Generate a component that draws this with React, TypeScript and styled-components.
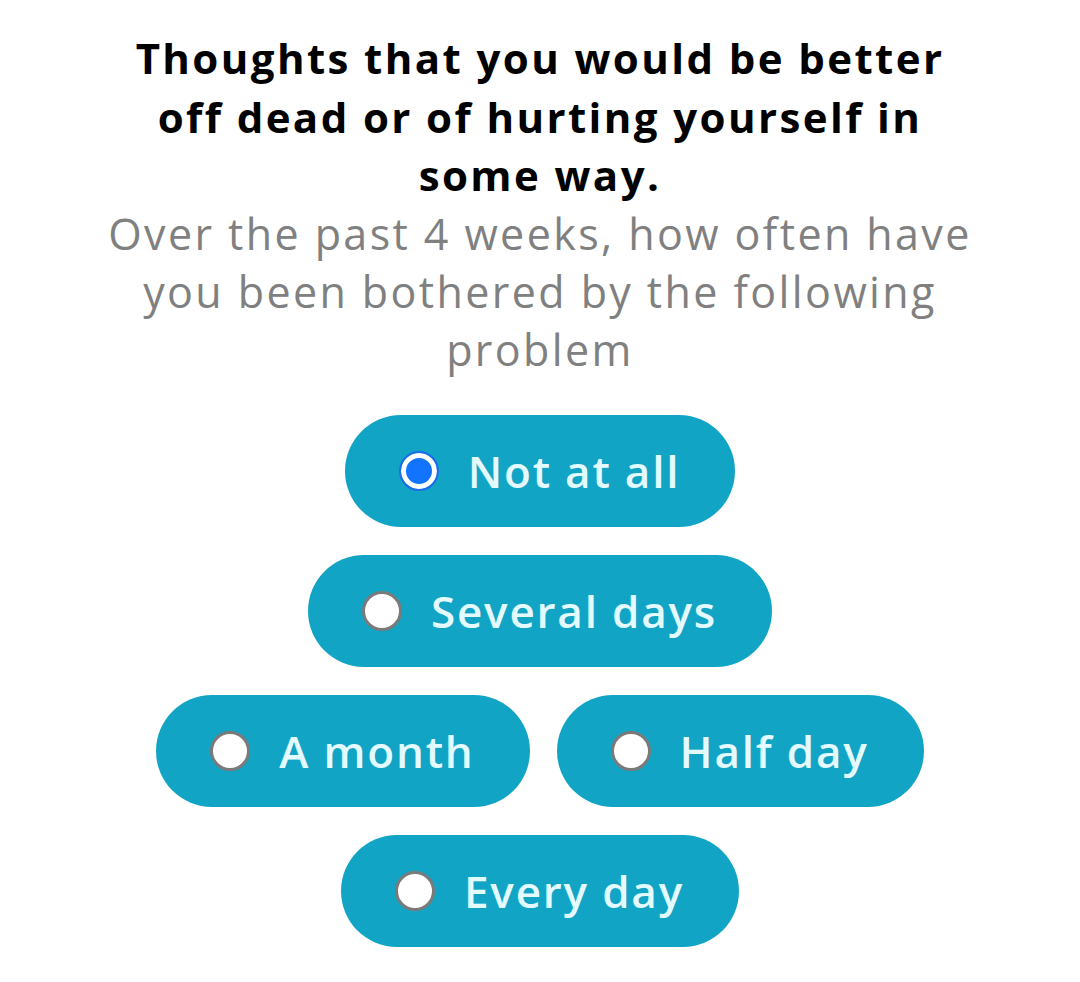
import React, { useState } from 'react';
import styled, { createGlobalStyle } from 'styled-components';

const GlobalStyle = createGlobalStyle`
  html, body {
    margin: 0;
    padding: 0;
    background: #ffffff;
  }
  body {
    font-family: "Open Sans", Lato, sans-serif;
  }
`;

const Page = styled.div`
  width: 1080px;
  min-height: 982px;
  display: flex;
  flex-direction: column;
  align-items: center;
  padding-top: 29px;
  box-sizing: border-box;
`;

const Question = styled.h1`
  margin: 0;
  width: 860px;
  text-align: center;
  font-size: 42px;
  line-height: 58.5px;
  letter-spacing: 2.4px;
  font-weight: 700;
  color: #000000;
`;

const Hint = styled.p`
  margin: 0;
  width: 880px;
  text-align: center;
  font-size: 43px;
  line-height: 58px;
  letter-spacing: 2.4px;
  font-weight: 400;
  color: #808080;
`;

const Options = styled.div`
  margin-top: 36px;
  width: 800px;
  display: flex;
  flex-wrap: wrap;
  justify-content: center;
  gap: 28px 27px;
`;

const Option = styled.button`
  height: 112px;
  padding: 0 55px 0 54px;
  border: none;
  border-radius: 56px;
  background: #12a4c5;
  display: flex;
  align-items: center;
  gap: 29px;
  cursor: pointer;
  font-family: inherit;
  font-size: 44px;
  font-weight: 600;
  letter-spacing: 1.8px;
  color: #e3fbff;
`;

type RadioProps = {
  checked: boolean;
};

const Radio = styled.span<RadioProps>`
  width: 40px;
  height: 40px;
  border-radius: 50%;
  box-sizing: border-box;
  flex-shrink: 0;
  background: ${({ checked }) => (checked ? '#1273ff' : '#ffffff')};
  border: ${({ checked }) => (checked ? '2px solid #1a6ee8' : '3px solid #7a7a7a')};
  box-shadow: ${({ checked }) => (checked ? 'inset 0 0 0 5px #ffffff' : 'none')};
`;

const choices = ['Not at all', 'Several days', 'A month', 'Half day', 'Every day'];

export default function App() {
  const [answer, setAnswer] = useState('Not at all');

  return (
    <Page>
      <GlobalStyle />
      <Question>Thoughts that you would be better off dead or of hurting yourself in some way.</Question>
      <Hint>Over the past 4 weeks, how often have you been bothered by the following problem</Hint>
      <Options>
        {choices.map((c) => (
          <Option key={c} onClick={() => setAnswer(c)}>
            <Radio checked={answer === c} />
            {c}
          </Option>
        ))}
      </Options>
    </Page>
  );
}
